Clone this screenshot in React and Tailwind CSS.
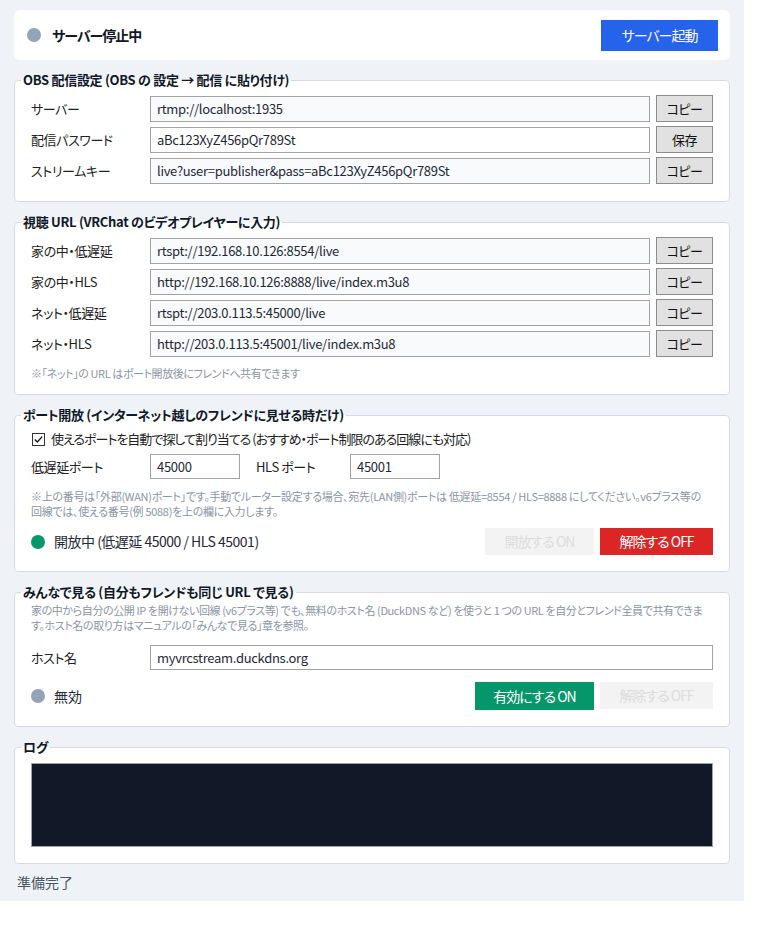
import React from "react";

const font = "font-['Noto_Sans_CJK_JP',sans-serif] [font-feature-settings:'palt']";

function Legend({ children }) {
  return (
    <legend className="-ml-[10px] px-[2px] text-[13px] leading-[18px] font-bold tracking-[-0.3px] text-[#111827]">
      {children}
    </legend>
  );
}

function Section({ title, className = "", children }) {
  return (
    <fieldset
      className={`rounded-[4px] border border-[#d6dae0] bg-white px-[16px] ${className}`}
    >
      <Legend>{title}</Legend>
      {children}
    </fieldset>
  );
}

function CopyButton({ children = "コピー" }) {
  return (
    <button className="ml-[6px] h-[27px] w-[57px] shrink-0 border border-[#8c8c8c] bg-[#e1e1e1] text-[13px] tracking-[-0.5px] text-[#111]">
      {children}
    </button>
  );
}

function Row({ label, value, action, plain = false }) {
  return (
    <div className="flex items-center">
      <span className="w-[119px] shrink-0 text-[13px] tracking-[-0.4px] text-[#222]">{label}</span>
      <input
        readOnly
        value={value}
        className={`h-[26px] min-w-0 flex-1 border border-[#a3a3a3] px-[6px] text-[13px] tracking-[-0.3px] text-[#1f2937] outline-none ${
          plain ? "bg-white" : "bg-[#f8fafc]"
        }`}
      />
      <CopyButton>{action}</CopyButton>
    </div>
  );
}

function Dot({ color }) {
  return <span className={`h-[14px] w-[14px] shrink-0 rounded-full ${color}`} />;
}

function Note({ children, className = "" }) {
  return (
    <p className={`text-[11px] leading-[15px] text-[#8b95a3] ${className}`}>
      {children}
    </p>
  );
}

function DisabledButton({ children, width }) {
  return (
    <button
      disabled
      className={`h-[27px] ${width} bg-[#f3f3f3] text-[14px] tracking-[-1px] text-[#dcdcdc]`}
    >
      {children}
    </button>
  );
}

const smallInput =
  "h-[25px] w-[90px] border border-[#a3a3a3] bg-white px-[6px] text-[13px] tracking-[-0.3px] text-[#1f2937] outline-none";

export default function App() {
  return (
    <div className={`${font} w-[744px] bg-[#eff3f8] px-[14px] pt-[10px] pb-[12px]`}>
      <div className="flex flex-col gap-[11px]">
        {/* server status */}
        <div className="flex h-[50px] items-center justify-between rounded-[6px] bg-white pl-[13px] pr-[12px]">
          <div className="flex items-center gap-[11px]">
            <Dot color="bg-[#94a3b8]" />
            <span className="text-[14px] font-bold tracking-[-1px] text-[#111827]">サーバー停止中</span>
          </div>
          <button className="h-[31px] w-[117px] bg-[#2563eb] text-[14px] tracking-[-1px] text-white">
            サーバー起動
          </button>
        </div>

        <Section title="OBS 配信設定 (OBS の 設定 → 配信 に貼り付け)" className="pt-[6px] pb-[17px]">
          <div className="flex flex-col gap-[4px]">
            <Row label="サーバー" value="rtmp://localhost:1935" action="コピー" />
            <Row label="配信パスワード" value="aBc123XyZ456pQr789St" action="保存" plain />
            <Row
              label="ストリームキー"
              value="live?user=publisher&pass=aBc123XyZ456pQr789St"
              action="コピー"
            />
          </div>
        </Section>

        <Section title="視聴 URL (VRChat のビデオプレイヤーに入力)" className="pt-[6px] pb-[13px]">
          <div className="flex flex-col gap-[4px]">
            <Row label="家の中・低遅延" value="rtspt://192.168.10.126:8554/live" action="コピー" />
            <Row label="家の中・HLS" value="http://192.168.10.126:8888/live/index.m3u8" action="コピー" />
            <Row label="ネット・低遅延" value="rtspt://203.0.113.5:45000/live" action="コピー" />
            <Row label="ネット・HLS" value="http://203.0.113.5:45001/live/index.m3u8" action="コピー" />
          </div>
          <Note className="mt-[8px] leading-[16px] tracking-[-0.4px]">
            ※「ネット」の URL はポート開放後にフレンドへ共有できます
          </Note>
        </Section>

        <Section title="ポート開放 (インターネット越しのフレンドに見せる時だけ)" className="pt-[6px] pb-[16px]">
          <label className="flex h-[18px] items-center text-[13px] tracking-[-1px] text-[#222]">
            <span className="ml-px mr-[6px] flex h-[13px] w-[13px] items-center justify-center border border-[#333] bg-white">
              <svg width="11" height="11" viewBox="0 0 11 11" fill="none">
                <path d="M1.8 5.6 L4.3 8 L9.2 2.6" stroke="#1a1a1a" strokeWidth="1.4" />
              </svg>
            </span>
            使えるポートを自動で探して割り当てる (おすすめ・ポート制限のある回線にも対応)
          </label>
          <div className="mt-[6px] flex items-center text-[13px] tracking-[-0.4px] text-[#222]">
            <span className="w-[119px] shrink-0">低遅延ポート</span>
            <input readOnly value="45000" className={smallInput} />
            <span className="ml-[16px] w-[94px] shrink-0">HLS ポート</span>
            <input readOnly value="45001" className={smallInput} />
          </div>
          <Note className="mt-[10px] tracking-[-0.3px]">
            ※上の番号は「外部(WAN)ポート」です。手動でルーター設定する場合、宛先(LAN側)ポートは 低遅延=8554 / HLS=8888 にしてください。v6プラス等の
            <br />
            回線では、使える番号(例 5088)を上の欄に入力します。
          </Note>
          <div className="mt-[9px] flex items-center">
            <Dot color="bg-[#059669]" />
            <span className="ml-[9px] text-[14px] tracking-[-0.5px] text-[#1f2937]">
              開放中 (低遅延 45000 / HLS 45001)
            </span>
            <div className="ml-auto flex gap-[6px]">
              <DisabledButton width="w-[109px]">開放する ON</DisabledButton>
              <button className="h-[27px] w-[113px] bg-[#dc2626] text-[14px] tracking-[-1px] text-white">
                解除する OFF
              </button>
            </div>
          </div>
        </Section>

        <Section title="みんなで見る (自分もフレンドも同じ URL で見る)" className="pt-[2px] pb-[16px]">
          <Note className="tracking-[-0.4px] text-[#7d8794]">
            家の中から自分の公開 IP を開けない回線 (v6プラス等) でも、無料のホスト名 (DuckDNS など) を使うと 1 つの URL を自分とフレンド全員で共有できま
            <br />
            す。ホスト名の取り方はマニュアルの「みんなで見る」章を参照。
          </Note>
          <div className="mt-[12px] flex items-center">
            <span className="w-[119px] shrink-0 text-[13px] tracking-[-0.4px] text-[#222]">ホスト名</span>
            <input
              readOnly
              value="myvrcstream.duckdns.org"
              className="h-[25px] min-w-0 flex-1 border border-[#a3a3a3] bg-white px-[6px] text-[13px] tracking-[-0.3px] text-[#1f2937] outline-none"
            />
          </div>
          <div className="mt-[12px] flex items-center">
            <Dot color="bg-[#94a3b8]" />
            <span className="ml-[9px] text-[14px] text-[#1f2937]">無効</span>
            <div className="ml-auto flex gap-[6px]">
              <button className="h-[28px] w-[119px] bg-[#059669] text-[14px] tracking-[-1px] text-white">
                有効にする ON
              </button>
              <DisabledButton width="w-[113px]">解除する OFF</DisabledButton>
            </div>
          </div>
        </Section>

        <Section title="ログ" className="pt-[7px] pb-[16px]">
          <div className="h-[84px] border border-[#9ca3af] bg-[#111827]" />
        </Section>

        <p className="ml-[3px] text-[14px] leading-[14px] text-[#4b5563]">準備完了</p>
      </div>
    </div>
  );
}
